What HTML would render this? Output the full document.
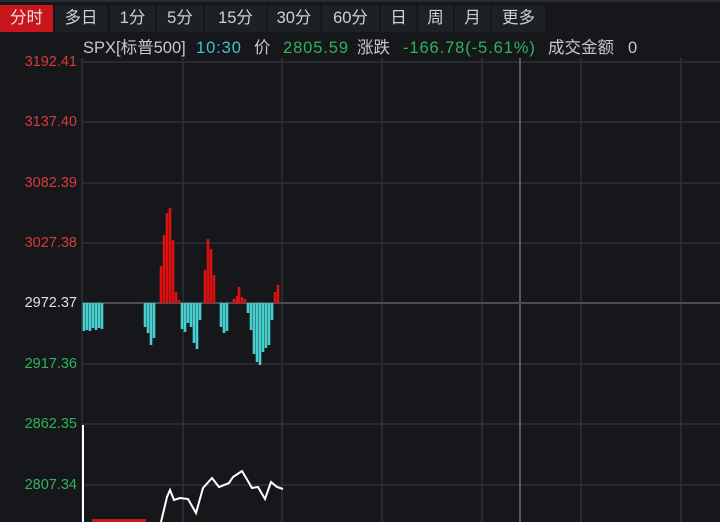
<!DOCTYPE html><html><head><meta charset="utf-8"><style>
body{margin:0;width:720px;height:522px;background:#15171b;overflow:hidden;font-family:"Liberation Sans","Noto Sans CJK SC",sans-serif;position:relative}
.tabs{position:absolute;left:0;top:0;width:720px;height:31px;background:#15171b;border-top:2px solid #2a2d33}
.tab{position:absolute;top:3px;height:27px;line-height:27px;background:#1d2025;color:#d0d0d0;font-size:16.5px;text-align:center}
.lbl{position:absolute;right:643px;font-size:14.5px;line-height:15px}
.hd{position:absolute;top:38px;height:20px;line-height:20px;font-size:16.5px;color:#c8c8c8;white-space:nowrap}
.n{letter-spacing:0.9px}
</style></head><body>
<div class="tabs">
<div class="tab" style="left:0;width:53px;background:#c8161d;color:#f2dede">分时</div>
<div class="tab" style="left:55px;width:52px">多日</div>
<div class="tab" style="left:110px;width:45px">1分</div>
<div class="tab" style="left:157px;width:46px">5分</div>
<div class="tab" style="left:205px;width:61px">15分</div>
<div class="tab" style="left:268px;width:52px">30分</div>
<div class="tab" style="left:322px;width:57px">60分</div>
<div class="tab" style="left:381px;width:35px">日</div>
<div class="tab" style="left:418px;width:35px">周</div>
<div class="tab" style="left:455px;width:35px">月</div>
<div class="tab" style="left:492px;width:53px">更多</div>
</div>
<div class="hd" style="left:83px">SPX[标普500]</div>
<div class="hd n" style="left:196px;color:#3cc4cc">10:30</div>
<div class="hd" style="left:254px">价</div>
<div class="hd n" style="left:283px;color:#2fb35a">2805.59</div>
<div class="hd" style="left:357px">涨跌</div>
<div class="hd n" style="left:403px;color:#2fb35a">-166.78(-5.61%)</div>
<div class="hd" style="left:548px">成交金额</div>
<div class="hd" style="left:628px">0</div>
<div class="lbl" style="top:55px;color:#d83a3a">3192.41</div>
<div class="lbl" style="top:115px;color:#d83a3a">3137.40</div>
<div class="lbl" style="top:176px;color:#d83a3a">3082.39</div>
<div class="lbl" style="top:236px;color:#d83a3a">3027.38</div>
<div class="lbl" style="top:296px;color:#e0e0e0">2972.37</div>
<div class="lbl" style="top:357px;color:#2fb35a">2917.36</div>
<div class="lbl" style="top:417px;color:#2fb35a">2862.35</div>
<div class="lbl" style="top:478px;color:#2fb35a">2807.34</div>
<svg width="720" height="522" style="position:absolute;left:0;top:0">
<g stroke="#2e3137" stroke-width="1.5">
<line x1="82" y1="62" x2="720" y2="62"/><line x1="82" y1="122" x2="720" y2="122"/><line x1="82" y1="183" x2="720" y2="183"/><line x1="82" y1="243" x2="720" y2="243"/><line x1="82" y1="364" x2="720" y2="364"/><line x1="82" y1="424" x2="720" y2="424"/><line x1="82" y1="485" x2="720" y2="485"/>
<line x1="82" y1="58" x2="82" y2="522"/><line x1="183" y1="58" x2="183" y2="522"/><line x1="282" y1="58" x2="282" y2="522"/><line x1="382" y1="58" x2="382" y2="522"/><line x1="482" y1="58" x2="482" y2="522"/><line x1="581" y1="58" x2="581" y2="522"/><line x1="681" y1="58" x2="681" y2="522"/>
</g>
<line x1="520" y1="58" x2="520" y2="522" stroke="#6a6d72" stroke-width="1.5"/>
<line x1="82" y1="303" x2="720" y2="303" stroke="#4a4d53" stroke-width="2"/>
<g stroke="#48d0d0" stroke-width="2.6">
<line x1="84" y1="303" x2="84" y2="331"/><line x1="87" y1="303" x2="87" y2="330"/><line x1="90" y1="303" x2="90" y2="331"/><line x1="93" y1="303" x2="93" y2="328"/><line x1="96" y1="303" x2="96" y2="330"/><line x1="99" y1="303" x2="99" y2="328"/><line x1="102" y1="303" x2="102" y2="329"/>
<line x1="145" y1="303" x2="145" y2="327"/><line x1="148" y1="303" x2="148" y2="333"/><line x1="151" y1="303" x2="151" y2="345"/><line x1="154" y1="303" x2="154" y2="338"/>
<line x1="182" y1="303" x2="182" y2="329"/><line x1="185" y1="303" x2="185" y2="332"/><line x1="188" y1="303" x2="188" y2="323"/><line x1="191" y1="303" x2="191" y2="327"/><line x1="194" y1="303" x2="194" y2="343"/><line x1="197" y1="303" x2="197" y2="349"/><line x1="200" y1="303" x2="200" y2="320"/>
<line x1="221" y1="303" x2="221" y2="327"/><line x1="224" y1="303" x2="224" y2="333"/><line x1="227" y1="303" x2="227" y2="331"/>
<line x1="248" y1="303" x2="248" y2="313"/><line x1="251" y1="303" x2="251" y2="330"/><line x1="254" y1="303" x2="254" y2="354"/><line x1="257" y1="303" x2="257" y2="362"/><line x1="260" y1="303" x2="260" y2="365"/><line x1="263" y1="303" x2="263" y2="352"/><line x1="266" y1="303" x2="266" y2="348"/><line x1="269" y1="303" x2="269" y2="345"/><line x1="272" y1="303" x2="272" y2="320"/>
</g>
<g stroke="#e01010" stroke-width="2.6">
<line x1="161" y1="303" x2="161" y2="266"/><line x1="164" y1="303" x2="164" y2="235"/><line x1="167" y1="303" x2="167" y2="213"/><line x1="170" y1="303" x2="170" y2="208"/><line x1="173" y1="303" x2="173" y2="240"/><line x1="176" y1="303" x2="176" y2="292"/><line x1="179" y1="303" x2="179" y2="300"/>
<line x1="205" y1="303" x2="205" y2="270"/><line x1="208" y1="303" x2="208" y2="239"/><line x1="211" y1="303" x2="211" y2="249"/><line x1="214" y1="303" x2="214" y2="275"/>
<line x1="234" y1="303" x2="234" y2="299"/><line x1="237" y1="303" x2="237" y2="296"/><line x1="239" y1="303" x2="239" y2="287"/><line x1="242" y1="303" x2="242" y2="297"/><line x1="245" y1="303" x2="245" y2="299"/>
<line x1="275" y1="303" x2="275" y2="292"/><line x1="278" y1="303" x2="278" y2="285"/>
</g>
<line x1="83" y1="425" x2="83" y2="522" stroke="#fff" stroke-width="2"/>
<rect x="92" y="519" width="54" height="3" fill="#c8161d"/>
<polyline fill="none" stroke="#fff" stroke-width="2" points="161,522 167,497 170,490 174,500 180,498 188,499 196,513 203,488 212,478 219,487 229,483 233,477 242,471 252,488 258,487 265,499 271,482 277,487 283,489"/>
</svg>
</body></html>
